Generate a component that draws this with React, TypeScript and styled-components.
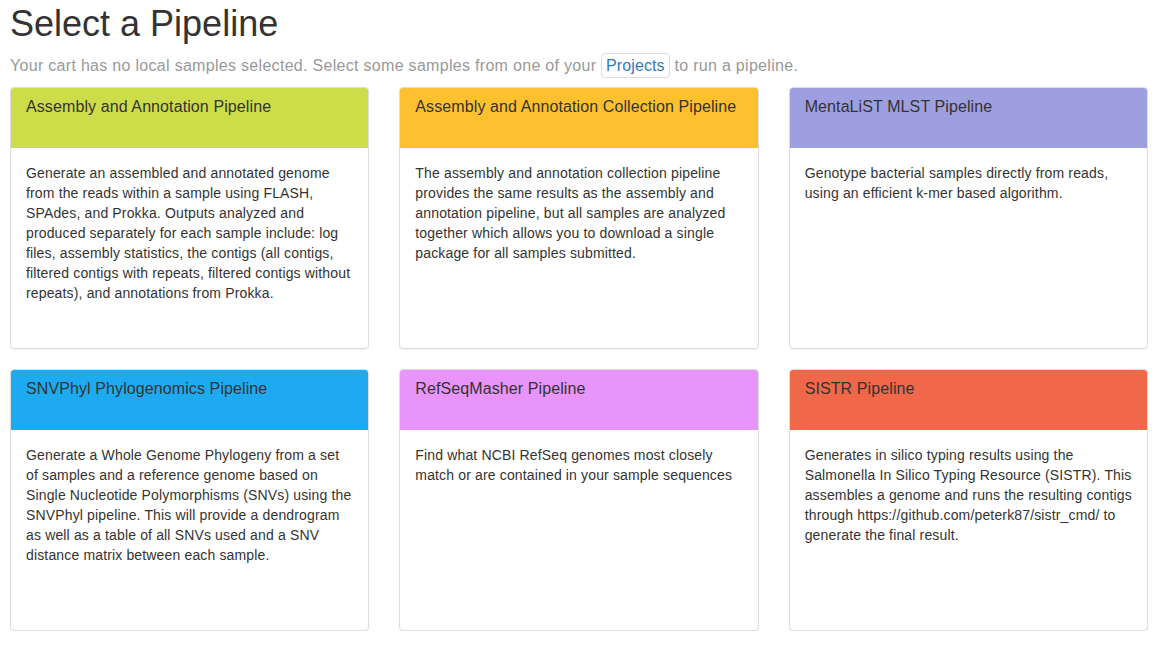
import styled, { createGlobalStyle } from "styled-components";

const pipelines = [
  {
    name: "Assembly and Annotation Pipeline",
    color: "#cddc49",
    text: "Generate an assembled and annotated genome from the reads within a sample using FLASH, SPAdes, and Prokka. Outputs analyzed and produced separately for each sample include: log files, assembly statistics, the contigs (all contigs, filtered contigs with repeats, filtered contigs without repeats), and annotations from Prokka.",
  },
  {
    name: "Assembly and Annotation Collection Pipeline",
    color: "#fdc02f",
    text: "The assembly and annotation collection pipeline provides the same results as the assembly and annotation pipeline, but all samples are analyzed together which allows you to download a single package for all samples submitted.",
  },
  {
    name: "MentaLiST MLST Pipeline",
    color: "#9e9fe0",
    text: "Genotype bacterial samples directly from reads, using an efficient k-mer based algorithm.",
  },
  {
    name: "SNVPhyl Phylogenomics Pipeline",
    color: "#1eaaf1",
    text: "Generate a Whole Genome Phylogeny from a set of samples and a reference genome based on Single Nucleotide Polymorphisms (SNVs) using the SNVPhyl pipeline. This will provide a dendrogram as well as a table of all SNVs used and a SNV distance matrix between each sample.",
  },
  {
    name: "RefSeqMasher Pipeline",
    color: "#e994fa",
    text: "Find what NCBI RefSeq genomes most closely match or are contained in your sample sequences",
  },
  {
    name: "SISTR Pipeline",
    color: "#f0674a",
    text: "Generates in silico typing results using the Salmonella In Silico Typing Resource (SISTR). This assembles a genome and runs the resulting contigs through https://github.com/peterk87/sistr_cmd/ to generate the final result.",
  },
];

const App = () => {
  return (
    <Page>
      <GlobalStyle />
      <Title>Select a Pipeline</Title>
      <Lead>
        Your cart has no local samples selected. Select some samples from one
        of your <ProjectsLink href="#">Projects</ProjectsLink> to run a
        pipeline.
      </Lead>
      <Grid>
        {pipelines.map((p) => (
          <Panel key={p.name}>
            <PanelHeading $color={p.color}>
              <PanelTitle>{p.name}</PanelTitle>
            </PanelHeading>
            <PanelBody>{p.text}</PanelBody>
          </Panel>
        ))}
      </Grid>
    </Page>
  );
};
export default App;

// styles
const GlobalStyle = createGlobalStyle`
  body {
    margin: 0;
    background: #fff;
    font-family: "Liberation Sans", Arial, sans-serif;
    color: #333;
  }
`;

const Page = styled.div`
  padding: 0 22px 0 10px;
`;

const Title = styled.h1`
  margin: 0;
  padding-top: 4px;
  font-size: 36px;
  font-weight: 500;
  line-height: 40px;
  color: #333;
`;

const Lead = styled.p`
  margin: 9px 0 8px;
  font-size: 16px;
  letter-spacing: 0.3px;
  line-height: 26px;
  color: #999;
`;

const ProjectsLink = styled.a`
  display: inline-block;
  padding: 0 4px;
  border: 1px solid #ddd;
  border-radius: 4px;
  color: #337ab7;
  text-decoration: none;
  letter-spacing: 0.1px;
  line-height: 23px;
`;

const Grid = styled.div`
  display: grid;
  grid-template-columns: repeat(3, 1fr);
  column-gap: 30px;
  row-gap: 20px;
`;

const Panel = styled.div`
  height: 262px;
  box-sizing: border-box;
  border: 1px solid #ddd;
  border-radius: 4px;
  background: #fff;
  box-shadow: 0 1px 1px rgba(0, 0, 0, 0.05);
  overflow: hidden;
`;

const PanelHeading = styled.div<{ $color: string }>`
  height: 60px;
  box-sizing: border-box;
  padding: 9px 15px;
  background: ${(p) => p.$color};
`;

const PanelTitle = styled.h3`
  margin: 0;
  font-size: 16px;
  font-weight: 500;
  letter-spacing: 0.1px;
  line-height: 20px;
  color: #333;
`;

const PanelBody = styled.div`
  padding: 15px;
  font-size: 14px;
  letter-spacing: 0.15px;
  line-height: 20px;
  color: #333;
`;
